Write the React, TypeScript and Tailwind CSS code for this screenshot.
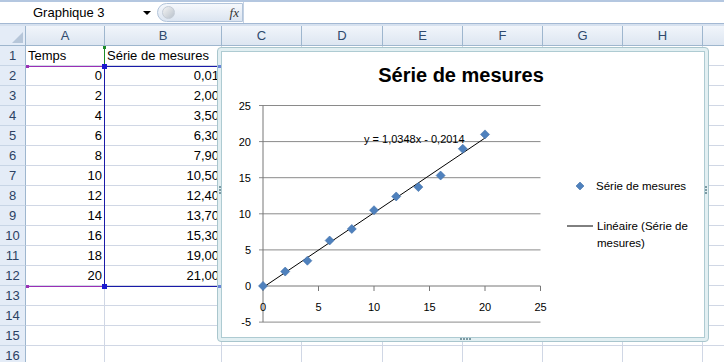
import React from 'react';

const COLS = [
  { label: 'A', w: 'w-[79px]' },
  { label: 'B', w: 'w-[117px]' },
  { label: 'C', w: 'w-[80px]' },
  { label: 'D', w: 'w-[81px]' },
  { label: 'E', w: 'w-[80px]' },
  { label: 'F', w: 'w-[80px]' },
  { label: 'G', w: 'w-[80px]' },
  { label: 'H', w: 'w-[80px]' },
  { label: '', w: 'w-[30px]' },
];

const TIMES = [0, 2, 4, 6, 8, 10, 12, 14, 16, 18, 20];
const VALUES = [0.01, 2, 3.5, 6.3, 7.9, 10.5, 12.4, 13.7, 15.3, 19, 21];

const fmt = (v: number) => v.toFixed(2).replace('.', ',');

// chart scale, in page pixels
const px = (x: number) => 263 + x * 11.1;
const py = (y: number) => 286 - y * 7.22;

const cellText = (row: number, col: number): { text: string; right?: boolean } => {
  if (row === 1 && col === 0) return { text: 'Temps' };
  if (row === 1 && col === 1) return { text: 'Série de mesures' };
  if (row >= 2 && row <= 12) {
    if (col === 0) return { text: String(TIMES[row - 2]), right: true };
    if (col === 1) return { text: fmt(VALUES[row - 2]), right: true };
  }
  return { text: '' };
};

const Diamond: React.FC<{ x: number; y: number; r?: number }> = ({ x, y, r = 4.5 }) => (
  <polygon
    points={`${x},${y - r} ${x + r},${y} ${x},${y + r} ${x - r},${y}`}
    fill="#4f81bd"
    stroke="#3f6fa8"
    strokeWidth="0.6"
  />
);

const Chart: React.FC = () => {
  const yTicks = [25, 20, 15, 10, 5, 0, -5];
  const xTicks = [0, 5, 10, 15, 20, 25];
  return (
    <svg width="482" height="285" viewBox="222 52 482 285" className="block">
      <text x="461" y="82" textAnchor="middle" fontSize="20" fontWeight="bold" fill="#000">
        Série de mesures
      </text>

      {/* grid lines */}
      {yTicks.map((t) => (
        <g key={t}>
          <line x1={259} x2={540.5} y1={py(t)} y2={py(t)} stroke={t === 0 ? '#777' : '#8a8a8a'} strokeWidth="1" />
          <text x="251" y={py(t) + 4} textAnchor="end" fontSize="11" fill="#000">
            {t}
          </text>
        </g>
      ))}
      <line x1={263} x2={263} y1={py(25)} y2={py(-5)} stroke="#777" strokeWidth="1" />
      {xTicks.map((t) => (
        <g key={t}>
          <line x1={px(t)} x2={px(t)} y1={286} y2={291} stroke="#777" strokeWidth="1" />
          <text x={px(t)} y="311" textAnchor="middle" fontSize="11" fill="#000">
            {t}
          </text>
        </g>
      ))}

      {/* trend line */}
      <line x1={px(0)} y1={py(-0.2014)} x2={px(20)} y2={py(20.4946)} stroke="#000" strokeWidth="1" />

      {TIMES.map((t, i) => (
        <Diamond key={t} x={px(t)} y={py(VALUES[i])} />
      ))}

      <text x="364" y="143" fontSize="11" fill="#000">
        y = 1,0348x - 0,2014
      </text>

      {/* legend */}
      <Diamond x={580} y={186} r={4} />
      <text x="596" y="190" fontSize="11.5" fill="#000">
        Série de mesures
      </text>
      <line x1="567" x2="593" y1="226" y2="226" stroke="#000" strokeWidth="1" />
      <text x="597" y="230" fontSize="11.5" fill="#000">
        Linéaire (Série de
      </text>
      <text x="597" y="247" fontSize="11.5" fill="#000">
        mesures)
      </text>
    </svg>
  );
};

const Dots: React.FC<{ vertical?: boolean; n?: number; className: string }> = ({ vertical, n = 3, className }) => (
  <div className={`absolute flex ${vertical ? 'flex-col' : 'flex-row'} gap-[1px] ${className}`}>
    {Array.from({ length: n }).map((_, i) => (
      <span key={i} className="w-[2px] h-[2px] bg-[#7b9aa3]" />
    ))}
  </div>
);

const App: React.FC = () => {
  const rows = Array.from({ length: 16 }, (_, i) => i + 1);
  return (
    <div className="relative w-[724px] h-[362px] overflow-hidden bg-white font-['Liberation_Sans',Arial,sans-serif] text-[13px] text-black">
      {/* Formula bar */}
      <div className="h-[24px] flex items-stretch border-t-2 border-[#b4c7e0] border-b border-b-[#a3b8d3] bg-white">
        <div className="w-[157px] flex items-center gap-[38px] pl-[33px]">
          <span className="text-[13px] text-black">Graphique 3</span>
          <span className="w-0 h-0 border-l-[4px] border-r-[4px] border-t-[4px] border-l-transparent border-r-transparent border-t-black" />
        </div>
        <div className="w-[86px] my-[1px] flex items-center justify-between rounded-l-full border border-[#b2c4da] bg-gradient-to-b from-[#f5f8fc] to-[#dce5f1] pl-[4px] pr-[3px]">
          <span className="w-[13px] h-[13px] rounded-full bg-gradient-to-br from-[#f4f4f4] to-[#b9c2cc] border border-[#c4ccd6]" />
          <span className="font-['Liberation_Serif',serif] italic text-[13px] text-[#333]">fx</span>
        </div>
        <div className="flex-1 bg-white border-l border-[#c3d1e3]" />
      </div>
      <div className="h-[2px] bg-[#d6e1ef]" />

      {/* Column headers */}
      <div className="flex h-[20px]">
        <div className="w-[26px] shrink-0 flex items-end justify-end p-[2px] border-r border-b border-[#9eb6ce] bg-[#e4ecf7]">
          <span className="w-0 h-0 border-l-[11px] border-b-[11px] border-l-transparent border-b-[#b6c6d9]" />
        </div>
        {COLS.map((c, i) => (
          <div
            key={i}
            className={`${c.w} shrink-0 flex items-center justify-center border-r border-b border-[#9eb6ce] bg-gradient-to-b from-[#f1f5fb] to-[#dde6f1] text-[13px] text-[#2f4a6d]`}
          >
            {c.label}
          </div>
        ))}
      </div>

      {/* Rows */}
      {rows.map((r) => (
        <div key={r} className="flex h-[20px]">
          <div className="w-[26px] shrink-0 flex items-center justify-center border-r border-[#9eb6ce] border-b border-b-[#c7d5e6] bg-[#e4ecf7] text-[13px] text-[#2c4263]">
            {r}
          </div>
          {COLS.map((c, ci) => {
            const cell = cellText(r, ci);
            return (
              <div
                key={ci}
                className={`${c.w} shrink-0 flex items-center overflow-hidden whitespace-nowrap border-r border-b border-[#d0d7e5] pt-[1px] ${
                  cell.right ? 'justify-end pr-[2px]' : 'pl-[2px]'
                }`}
              >
                {cell.text}
              </div>
            );
          })}
        </div>
      ))}

      {/* Source range highlights: series name (green), x values (purple), y values (blue) */}
      <div className="absolute left-[104px] top-[47px] w-[117px] h-[20px] border-l border-[#1d8a2a]" />
      <div className="absolute left-[103px] top-[46px] w-[3px] h-[3px] bg-[#1d8a2a]" />
      <div className="absolute left-[26px] top-[66px] w-[79px] h-[221px] border-y border-[#9a2fb6]" />
      <div className="absolute left-[104px] top-[66px] w-[116px] h-[221px] border-l border-y border-[#1a1aa8]" />
      <div className="absolute left-[26px] top-[65px] w-[3px] h-[3px] bg-[#9a2fb6]" />
      <div className="absolute left-[26px] top-[285px] w-[3px] h-[3px] bg-[#9a2fb6]" />
      <div className="absolute left-[102px] top-[64px] w-[5px] h-[5px] bg-[#1a1ad0]" />
      <div className="absolute left-[102px] top-[284px] w-[5px] h-[5px] bg-[#1a1ad0]" />

      {/* Chart object */}
      <div className="absolute left-[217px] top-[47px] w-[492px] h-[295px] rounded-[4px] border border-[#a9c6cd] bg-[#e2eff2] p-[3px]">
        <div className="w-full h-full border border-[#aecbd2] bg-white">
          <Chart />
        </div>
        <Dots vertical className="left-[1px] top-[138px]" />
        <Dots vertical className="right-[1px] top-[138px]" />
        <Dots n={4} className="bottom-[1px] left-[242px]" />
      </div>
      <div className="absolute left-[218px] top-[65px] w-[3px] h-[3px] bg-[#6a86d8]" />
      <div className="absolute left-[218px] top-[285px] w-[3px] h-[3px] bg-[#6a86d8]" />
    </div>
  );
};

export default App;
